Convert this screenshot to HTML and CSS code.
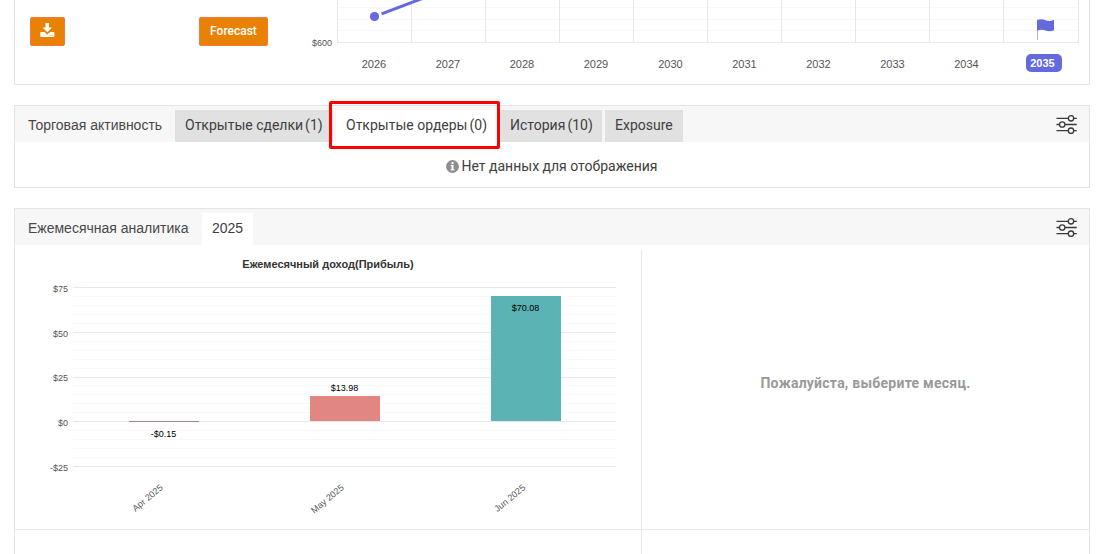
FILE: index.html
```html
<!DOCTYPE html>
<html lang="ru">
<head>
<meta charset="utf-8">
<title>Аналитика</title>
<link rel="stylesheet" href="styles.css">
</head>
<body>
<svg class="defs" aria-hidden="true">
  <symbol id="sliders" viewBox="0 0 22 20">
    <g fill="none" stroke="#3a3a3a" stroke-width="1.3">
      <path d="M.5 4.3h11.6M17.900 4.3h2.900M.5 10.500h2.900M9.100 10.500h11.600M.5 16.700h11.600M17.900 16.700h2.900"/>
      <circle cx="15" cy="4.300" r="2.700"/><circle cx="6.200" cy="10.500" r="2.700"/><circle cx="15" cy="16.700" r="2.700"/>
    </g>
  </symbol>
</svg>
<main class="page">
  <section class="panel forecast">
    <div class="controls">
      <button class="btn btn-icon" aria-label="Download">
        <svg width="15" height="15" viewBox="0 0 15 15" fill="#fff"><path d="M5.500 0h3.500v4.500h3L7.300 9.300 2.500 4.500h3z"/><path d="M1.200 9h3.300l2.800 2.400L10.100 9h3.300q1 0 1 1v3q0 1-1 1H1.200q-1 0-1-1v-3q0-1 1-1z"/><path d="M9.400 12h1.200v1H9.400zM11.600 12h1.200v1h-1.200z" fill="#e98204" opacity=".5"/></svg>
      </button>
      <button class="btn">Forecast</button>
    </div>
    <svg class="forecast-chart" width="784" height="84" viewBox="300 0 784 84">
      <path class="minor" d="M337 7.500h741M337 19.500h741M337 30.500h741"/>
      <path class="major" d="M337.500 0v42.500M411.500 0v42.500M485.500 0v42.500M559.500 0v42.500M633.500 0v42.500M707.500 0v42.500M781.500 0v42.500M855.500 0v42.500M929.500 0v42.500M1003.500 0v42.500M1078.500 0v42.500M337 42.500h742"/>
      <path d="M381.500 13.800 426-2.900" stroke="#6469de" stroke-width="3" fill="none"/>
      <circle cx="374.500" cy="16.500" r="4.600" fill="#6469de"/>
      <text class="axis" x="332" y="46" text-anchor="end">$600</text>
      <g class="years">
        <text x="374" y="68">2026</text><text x="448" y="68">2027</text><text x="522" y="68">2028</text><text x="596" y="68">2029</text><text x="670.500" y="68">2030</text><text x="744.500" y="68">2031</text><text x="818.500" y="68">2032</text><text x="892.500" y="68">2033</text><text x="966.500" y="68">2034</text>
      </g>
      <path d="M1037.500 19.500V40" stroke="#a9abed" stroke-width="1"/>
      <path d="M1037 20.200q4.200-1.700 8.500 0t8.500-.5v10.500q-4.200 2-8.500 .3t-8.500 .3z" fill="#6469de"/>
      <rect x="1026" y="54" width="36" height="18" rx="5" fill="#6469de"/>
      <text class="current" x="1042.500" y="67">2035</text>
    </svg>
  </section>

  <section class="panel activity">
    <header class="head">
      <h2 class="title title-activity">Торговая активность</h2>
      <nav class="tabs">
        <a class="tab deals">Открытые сделки<span class="count">(1)</span></a>
        <a class="tab orders active">Открытые ордеры<span class="count">(0)</span></a>
        <a class="tab history">История<span class="count">(10)</span></a>
        <a class="tab exposure">Exposure</a>
      </nav>
      <svg class="settings"><use href="#sliders"/></svg>
    </header>
    <div class="empty">
      <svg width="13" height="13" viewBox="0 0 13 13"><circle cx="6.500" cy="6.500" r="6.400" fill="#8d8d8d"/><path d="M5.500 2h2v1.900h-2zM4.700 5h2.800v4h.8v1.400H4.700V9h.8V6.300h-.8z" fill="#fff"/></svg>
      <span>Нет данных для отображения</span>
    </div>
  </section>

  <section class="panel monthly">
    <header class="head">
      <h2 class="title title-monthly">Ежемесячная аналитика</h2>
      <nav class="tabs"><a class="tab year active">2025</a></nav>
      <svg class="settings"><use href="#sliders"/></svg>
    </header>
    <div class="grid">
      <div class="cell chart-cell">
        <svg width="626" height="279" viewBox="15 250 626 279">
          <text class="chart-title" x="328" y="268">Ежемесячный доход(Прибыль)</text>
          <path class="minor" d="M73 296.500h543M73 305.500h543M73 314.500h543M73 323.500h543M73 341.500h543M73 350.500h543M73 359.500h543M73 368.500h543M73 385.500h543M73 394.500h543M73 403.500h543M73 412.500h543M73 430.500h543M73 439.500h543M73 448.500h543M73 457.500h543"/>
          <path class="major" d="M73 287.500h543M73 332.500h543M73 377.500h543M73 421.500h543M73 466.500h543"/>
          <rect x="129" y="421" width="70" height="1" fill="#a47fa5"/>
          <rect x="310" y="396" width="70" height="25" fill="#e28683"/>
          <rect x="491" y="296" width="70" height="125" fill="#5bb3b3"/>
          <g class="axis" text-anchor="end">
            <text x="68" y="292">$75</text><text x="68" y="337">$50</text><text x="68" y="381">$25</text><text x="68" y="426">$0</text><text x="68" y="471">-$25</text>
          </g>
          <g class="value"><text x="163.500" y="437">-$0.15</text><text x="344.500" y="391">$13.98</text><text x="525.500" y="311">$70.08</text></g>
          <g class="month">
            <text transform="translate(163.500 488.500) rotate(-40)">Apr 2025</text><text transform="translate(344.500 488.500) rotate(-40)">May 2025</text><text transform="translate(526 488.500) rotate(-40)">Jun 2025</text>
          </g>
        </svg>
      </div>
      <div class="cell message">Пожалуйста, выберите месяц.</div>
      <div class="cell chart-cell"></div>
      <div class="cell"></div>
    </div>
  </section>
</main>
</body>
</html>
```
FILE: styles.css
```css
* { box-sizing: border-box; }
body { margin: 0; height: 554px; overflow: hidden; background: #fff; color: #404040; font-family: Roboto, "Liberation Sans", sans-serif; }
.defs { display: none; }
.page { display: flex; flex-direction: column; gap: 20px; height: 554px; padding: 0 10px 0 14px; }
.panel { flex: none; border: 1px solid #e4e4e4; }
.forecast { display: flex; justify-content: space-between; height: 85px; border-top: 0; }
.controls { display: flex; justify-content: space-between; align-items: flex-start; width: 253px; padding: 17px 0 0 15px; }
.btn { width: 69px; height: 29px; padding: 0 0 2px; border: 1px solid #f27a3c; border-radius: 2px; background: #e98204; color: #fff; font: 500 12px Roboto, sans-serif; }
.btn-icon { width: 35px; padding: 0; }
.forecast-chart { flex: none; margin-right: 5px; }
svg text { font-family: "Liberation Sans", Arial, sans-serif; }
.minor, .major { fill: none; stroke: #f8f8f8; }
.major { stroke: #e8e8e8; }
.axis { fill: #555; font-size: 9px; }
.years { fill: #555; font-size: 11px; text-anchor: middle; }
.current { fill: #fff; font-size: 11px; font-weight: 700; text-anchor: middle; }
.activity { height: 83px; }
.head { display: flex; align-items: flex-end; height: 36px; padding: 0 11px 0 13px; background: #f7f7f7; }
.title { flex: none; margin: 0; padding-bottom: 1px; color: #484848; font-family: "Liberation Sans", Arial, sans-serif; font-size: 14px; font-weight: 400; line-height: 31px; white-space: nowrap; }
.title-activity { width: 147px; }
.title-monthly { width: 174px; }
.tabs { display: flex; gap: 3px; }
.tab { position: relative; height: 32px; padding: 0 0 0 10px; background: #e1e1e1; font-size: 14px; line-height: 31px; white-space: nowrap; }
.tab.active { background: #fff; }
.count { margin-left: 2px; }
.deals { width: 158px; }
.orders { width: 161px; }
.history { width: 102px; }
.exposure { width: 78px; }
.year { width: 51px; font-family: "Liberation Sans", Arial, sans-serif; }
.orders::after { content: ""; position: absolute; inset: -9px -3px -7px -7px; z-index: 1; border: 3px solid #f00; border-radius: 2px; }
.settings { width: 22px; height: 20px; margin: 0 0 8px auto; }
.empty { display: flex; align-items: center; justify-content: center; gap: 3px; height: 45px; padding: 3px 1px 0 0; font-size: 14px; }
.monthly { flex: 1 1 0; min-height: 0; border-bottom: 0; }
.grid { display: grid; grid-template-columns: 627px 1fr; grid-template-rows: 280px 1fr; height: 309px; padding-top: 5px; }
.cell { border-bottom: 1px solid #e9e9e9; }
.cell:nth-child(n + 3) { border-bottom: 0; }
.chart-cell { border-right: 1px solid #e9e9e9; }
.chart-cell svg { display: block; }
.chart-title { fill: #333; font-size: 11px; font-weight: 700; text-anchor: middle; }
.value { fill: #000; font-size: 9px; text-anchor: middle; }
.month { fill: #555; font-size: 9px; text-anchor: end; }
.message { display: flex; align-items: center; justify-content: center; padding: 0 0 13px; color: #999; font-size: 14px; font-weight: 700; letter-spacing: .25px; }
```
